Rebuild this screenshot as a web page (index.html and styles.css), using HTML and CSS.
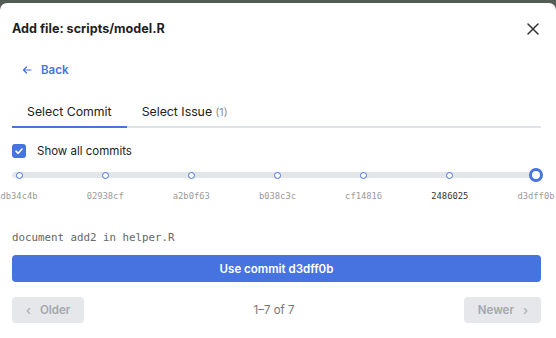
FILE: index.html
```html
<!DOCTYPE html>
<html>
<head>
    <title>Add file</title>
    <link rel="stylesheet" href="styles.css">
</head>
<body>
    <div class="modal">
        <div class="modal-header">
            <h1 class="modal-title">Add file: scripts/model.R</h1>
            <button class="close-btn" aria-label="Close">
                <svg width="12" height="12" viewBox="0 0 12 12">
                    <path d="M1 1 L11 11 M11 1 L1 11" stroke="#333" stroke-width="1.5" stroke-linecap="round"/>
                </svg>
            </button>
        </div>

        <a class="back-link" href="#">
            <svg width="10" height="10" viewBox="0 0 10 10">
                <path d="M9 5 H1.5 M4.5 2 L1.5 5 L4.5 8" fill="none" stroke="#4673e0" stroke-width="1.2" stroke-linecap="round" stroke-linejoin="round"/>
            </svg>
            <span>Back</span>
        </a>

        <div class="tabs">
            <div class="tab active">Select Commit</div>
            <div class="tab">Select Issue <span class="count">(1)</span></div>
        </div>

        <label class="checkbox-row">
            <span class="checkbox">
                <svg width="10" height="10" viewBox="0 0 10 10">
                    <path d="M2 5.2 L4.2 7.3 L8 3" fill="none" stroke="#fff" stroke-width="1.6" stroke-linecap="round" stroke-linejoin="round"/>
                </svg>
            </span>
            Show all commits
        </label>

        <div class="timeline">
            <div class="commit"><span class="dot"></span><span class="sha">db34c4b</span></div>
            <div class="commit"><span class="dot"></span><span class="sha">02938cf</span></div>
            <div class="commit"><span class="dot"></span><span class="sha">a2b0f63</span></div>
            <div class="commit"><span class="dot"></span><span class="sha">b038c3c</span></div>
            <div class="commit"><span class="dot"></span><span class="sha">cf14816</span></div>
            <div class="commit"><span class="dot"></span><span class="sha strong">2486025</span></div>
            <div class="commit selected"><span class="dot"></span><span class="sha">d3dff0b</span></div>
        </div>

        <div class="commit-message">document add2 in helper.R</div>

        <button class="use-btn">Use commit d3dff0b</button>

        <div class="pager">
            <button class="pager-btn older" disabled><span class="chev">&lsaquo;</span> Older</button>
            <span class="pager-info">1–7 of 7</span>
            <button class="pager-btn newer" disabled>Newer <span class="chev">&rsaquo;</span></button>
        </div>
    </div>
</body>
</html>
```

FILE: styles.css
```css
html, body {
    margin: 0;
    padding: 0;
    background-color: #545d55;
    height: 100%;
    overflow: hidden;
}

body {
    font-family: Inter, "Liberation Sans", sans-serif;
    color: #222;
}

.modal {
    margin-top: 3px;
    background-color: #fff;
    border-radius: 7px;
    height: 345px;
    padding: 0 15px 0 12px;
    box-sizing: border-box;
}

.modal-header {
    display: flex;
    align-items: center;
    justify-content: space-between;
    padding-top: 16px;
}

.modal-title {
    margin: 0;
    font-size: 12.6px;
    line-height: 20px;
    font-weight: 700;
    color: #1f1f1f;
}

.close-btn {
    border: none;
    background: none;
    padding: 0;
    margin-right: 2px;
    width: 12px;
    height: 12px;
    display: flex;
}

.back-link {
    display: flex;
    align-items: center;
    gap: 9px;
    margin-top: 23px;
    padding-left: 10px;
    line-height: 16px;
    font-size: 11.5px;
    font-weight: 600;
    color: #4673e0;
    text-decoration: none;
}

.tabs {
    display: flex;
    margin-top: 17px;
    border-bottom: 2px solid #dfe2e6;
}

.tab {
    padding: 9px 15px 5px;
    font-size: 12.3px;
    line-height: 16px;
    color: #222;
    margin-bottom: -2px;
    border-bottom: 2px solid transparent;
}

.tab.active {
    border-bottom-color: #4673e0;
}

.tab .count {
    color: #888;
    font-size: 10.5px;
}

.checkbox-row {
    display: flex;
    align-items: center;
    gap: 11px;
    margin-top: 16px;
    font-size: 11.5px;
    line-height: 14px;
    color: #222;
}

.checkbox {
    width: 14px;
    height: 14px;
    border-radius: 3px;
    background-color: #4673e0;
    display: flex;
    align-items: center;
    justify-content: center;
}

.timeline {
    position: relative;
    display: flex;
    justify-content: space-between;
    margin-top: 10px;
    margin-right: -2px;
}

.timeline::before {
    content: '';
    position: absolute;
    top: 4px;
    left: 0;
    right: 8px;
    height: 6px;
    border-radius: 3px;
    background-color: #e3e6e9;
}

.commit {
    width: 14px;
    display: flex;
    flex-direction: column;
    align-items: center;
    gap: 8px;
    position: relative;
}

.dot {
    width: 14px;
    height: 14px;
    display: flex;
    align-items: center;
    justify-content: center;
}

.dot::after {
    content: '';
    width: 5px;
    height: 5px;
    border: 1.5px solid #4673e0;
    border-radius: 50%;
    background-color: #fff;
}

.selected .dot::after {
    width: 8px;
    height: 8px;
    border: 3px solid #4673e0;
}

.sha {
    font-family: "DejaVu Sans Mono", monospace;
    font-size: 8.8px;
    line-height: 12px;
    color: #9a9a9a;
    white-space: nowrap;
}

.sha.strong {
    color: #333;
}

.commit-message {
    margin-top: 28px;
    font-family: "DejaVu Sans Mono", monospace;
    font-size: 10.8px;
    line-height: 16px;
    color: #666;
}

.use-btn {
    display: block;
    width: 100%;
    margin-top: 9px;
    height: 27px;
    border: none;
    border-radius: 4px;
    background-color: #4673e0;
    color: #fff;
    font-family: Inter, "Liberation Sans", sans-serif;
    font-size: 11.5px;
    font-weight: 600;
}

.pager {
    display: flex;
    align-items: center;
    justify-content: space-between;
    margin-top: 15px;
}

.pager-btn {
    height: 26px;
    border: none;
    border-radius: 4px;
    background-color: #e5e7ea;
    color: #a4a8ad;
    font-family: Inter, "Liberation Sans", sans-serif;
    font-size: 11.5px;
    font-weight: 600;
    display: flex;
    align-items: center;
    gap: 9px;
}

.pager-btn.older {
    padding: 0 14px 0 14px;
}

.pager-btn.newer {
    padding: 0 13px 0 14px;
}

.chev {
    font-weight: 400;
    font-size: 13px;
}

.pager-info {
    font-size: 11.5px;
    color: #777;
}
```
